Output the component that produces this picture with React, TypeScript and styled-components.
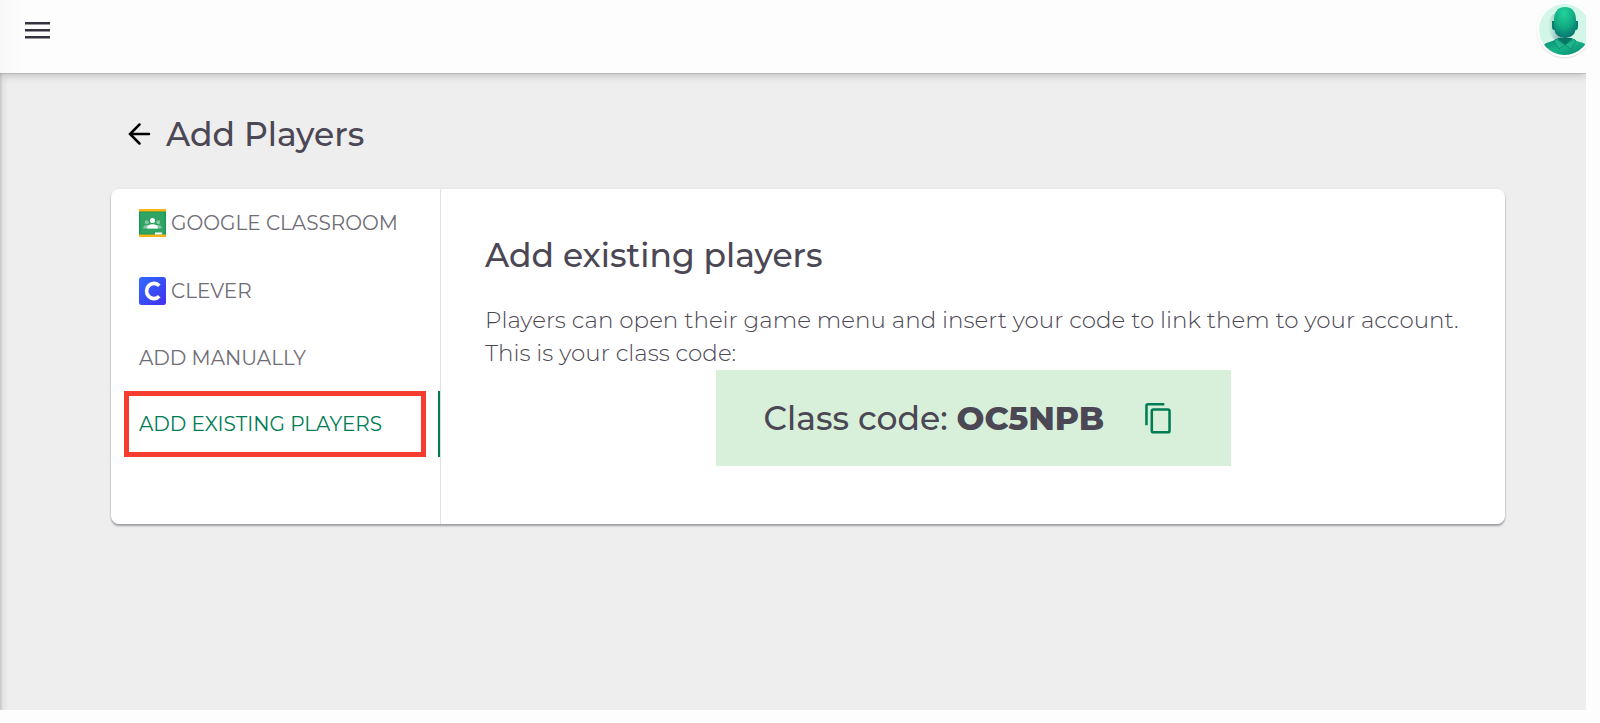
import React, { useState } from "react";
import styled, { createGlobalStyle } from "styled-components";

const ink = "#4b4754";
const green = "#007c55";

const GlobalStyle = createGlobalStyle`
  * { box-sizing: border-box; }
  body {
    margin: 0;
    background: #fdfdfd;
    color: ${ink};
    font-family: Montserrat, Inter, "Open Sans", sans-serif;
  }
  h1, h2, p { margin: 0; font-weight: 400; }
  button { font: inherit; color: inherit; background: none; border: 0; padding: 0; cursor: pointer; }
  svg { display: block; flex: none; }
`;

const Shell = styled.div`
  display: flex;
  flex-direction: column;
  min-height: calc(100vh - 13px);
  margin: 0 14px 13px 0;
  background: linear-gradient(90deg, #c6c6c6, #e4e4e4 3px, #eeeeee 8px);
  overflow: hidden;
`;

const TopBar = styled.header`
  display: flex;
  justify-content: space-between;
  align-items: flex-start;
  height: 73px;
  padding: 2px 0 0 20px;
  background: linear-gradient(90deg, #f8f8f8, #fdfdfd 28px);
  box-shadow: 0 1px 1px rgba(0, 0, 0, 0.1), 0 3px 8px rgba(0, 0, 0, 0.18);
`;

const MenuButton = styled.button`
  padding: 11px 0;
`;

const AvatarButton = styled.button`
  width: 55px;
  height: 55px;
  margin-right: -6px;
  border: 2px solid #ffffff;
  border-radius: 50%;
  box-shadow: 0 1px 2px rgba(0, 0, 0, 0.14);
  overflow: hidden;
`;

const Content = styled.main`
  padding: 38px 81px 60px 111px;
`;

const TitleRow = styled.div`
  display: flex;
  align-items: center;
  gap: 10px;
  height: 46px;
  margin-bottom: 32px;
  padding-left: 13px;
`;

const BackLink = styled.a`
  color: #000000;
`;

const PageTitle = styled.h1`
  font-size: 33px;
  font-weight: 500;
  line-height: 46px;
`;

const Card = styled.section`
  display: flex;
  background: #ffffff;
  border-radius: 8px;
  box-shadow: 0 2px 2px rgba(40, 44, 54, 0.4), 0 0 3px rgba(0, 0, 0, 0.06);
`;

const Tabs = styled.nav`
  display: flex;
  flex-direction: column;
  flex: 0 0 330px;
  border-right: 1px solid #e2e2e4;
`;

const Tab = styled.button<{ $active: boolean; $tall?: boolean }>`
  position: relative;
  display: flex;
  align-items: center;
  gap: 5px;
  height: ${(p) => (p.$tall ? 68 : 66)}px;
  padding-left: 28px;
  font-size: 20px;
  line-height: 26px;
  text-align: left;
  white-space: nowrap;
  color: ${(p) => (p.$active ? green : "#706d76")};
  box-shadow: ${(p) => (p.$active ? `inset -2px 0 0 ${green}` : "none")};

  &::after {
    content: "";
    display: ${(p) => (p.$active ? "block" : "none")};
    position: absolute;
    inset: 0 14px 0 13px;
    border: 5px solid #f73d30;
  }
`;

const Panel = styled.div`
  flex: 1;
  min-width: 0;
  padding: 44px 44px 58px;
`;

const PanelTitle = styled.h2`
  margin-bottom: 27px;
  font-size: 33px;
  font-weight: 500;
  line-height: 44px;
`;

const Copy = styled.p`
  font-size: 23px;
  font-weight: 300;
  line-height: 33px;
`;

const CodeBox = styled.div`
  display: flex;
  align-items: center;
  justify-content: space-between;
  width: 515px;
  max-width: 100%;
  height: 96px;
  margin: 0 auto;
  padding: 0 56px 0 48px;
  background: #d8f0da;
  font-size: 33px;
  font-weight: 500;
  line-height: 44px;
`;

const CodeValue = styled.strong`
  font-weight: 800;
`;

const CopyButton = styled.button`
  color: ${green};
`;

const MenuIcon = () => (
  <svg width="34" height="34" viewBox="0 0 34 34" fill="none" stroke="#37323f" strokeWidth="2.4">
    <path d="M5 10.2H30M5 17.2H30M5 24.2H30" />
  </svg>
);

const BackIcon = () => (
  <svg width="32" height="32" viewBox="0 0 32 32" fill="none" stroke="currentColor" strokeWidth="2.5" strokeLinecap="round">
    <path d="M25 16H6.500M15.500 6.500L6 16L15.500 25.500" />
  </svg>
);

const CopyIcon = () => (
  <svg width="32" height="32" viewBox="0 0 24 24" fill="none" stroke="currentColor" strokeWidth="1.900">
    <path d="M16 1.700H3.600a1 1 0 0 0-1 1V17.500" />
    <rect x="6.600" y="5.700" width="13.300" height="17" rx="1.200" />
  </svg>
);

const ClassroomIcon = () => (
  <svg width="27" height="28" viewBox="0 0 28 28" preserveAspectRatio="none">
    <path d="M0 0H28V28H0z" fill="#fbb416" />
    <path d="M0 2.500H28V25.500H0z" fill="#139a58" />
    <path d="M1.500 3.500H26.500V24.500H1.500z" fill="#2fa463" />
    <g fill="#84c9a1">
      <circle cx="8" cy="13.200" r="2" />
      <circle cx="20" cy="13.200" r="2" />
      <path d="M4.500 19.500v-1c0-1.700 2-2.500 4-2.500h11c2 0 4 .8 4 2.500v1z" />
    </g>
    <path d="M8.500 19.500v-1.200c0-2 3-3.100 5.500-3.100s5.500 1.100 5.500 3.100v1.200z" fill="#fff" />
    <circle cx="14" cy="11.500" r="2.600" fill="#fff" />
    <path d="M16.500 23.500H24V25.500H16.500z" fill="#fff" />
  </svg>
);

const CleverIcon = () => (
  <svg width="27" height="28" viewBox="0 0 28 28" preserveAspectRatio="none">
    <defs>
      <linearGradient id="clever" x1="0" y1="0" x2="1" y2="1">
        <stop offset="0" stopColor="#2f6bff" />
        <stop offset="1" stopColor="#4330ee" />
      </linearGradient>
    </defs>
    <rect width="28" height="28" rx="2.500" fill="url(#clever)" />
    <path d="M21 8.800A7.600 7.600 0 1 0 21 19.200" fill="none" stroke="#fff" strokeWidth="3.800" />
  </svg>
);

const AvatarIcon = () => (
  <svg width="51" height="51" viewBox="0 0 51 51">
    <defs>
      <radialGradient id="face" cx=".45" cy=".2" r=".9">
        <stop offset="0" stopColor="#22d29b" />
        <stop offset=".5" stopColor="#12ab83" />
        <stop offset=".8" stopColor="#0b8274" />
        <stop offset="1" stopColor="#086368" />
      </radialGradient>
      <linearGradient id="body" x1="0" y1="0" x2="1" y2="1">
        <stop offset="0" stopColor="#0a8c72" />
        <stop offset=".5" stopColor="#16b488" />
        <stop offset="1" stopColor="#07836c" />
      </linearGradient>
      <linearGradient id="shade" x1="0" y1="0" x2="1" y2="0">
        <stop offset="0" stopColor="#6f9fa5" stopOpacity="0" />
        <stop offset="1" stopColor="#53808c" stopOpacity=".8" />
      </linearGradient>
    </defs>
    <rect width="51" height="51" fill="#d2f6e7" />
    <path d="M15 10C7 15 6 29 17 37L24 33V10z" fill="url(#shade)" />
    <path d="M4 42C6 38 13 38 18 35H33C38 38 45 38 47 41V51H4z" fill="url(#body)" />
    <path d="M18 34H34L26 41z" fill="#087567" />
    <path d="M17 35L26 41L20 45L15 37zM35 35L26 41L32 45L37 37z" fill="#20b58b" stroke="#08876f" strokeWidth=".7" />
    <path d="M13 17h3v9h-1c-2 0-2-3-2-5zM39 17h-3v9h1c2 0 2-3 2-5z" fill="#078069" />
    <path d="M26 3C34 3 37 9 37 16C37 21 37 27 35 30C32 33 29 34 26 34S20 33 17 30C15 27 15 21 15 16C15 9 18 3 26 3z" fill="url(#face)" />
  </svg>
);

const tabs = [
  { id: "google", label: "GOOGLE CLASSROOM", icon: <ClassroomIcon /> },
  { id: "clever", label: "CLEVER", icon: <CleverIcon /> },
  { id: "manual", label: "ADD MANUALLY" },
  { id: "existing", label: "ADD EXISTING PLAYERS" },
];

export default function App() {
  const [active, setActive] = useState("existing");
  return (
    <>
      <GlobalStyle />
      <Shell>
        <TopBar>
          <MenuButton aria-label="Open menu"><MenuIcon /></MenuButton>
          <AvatarButton aria-label="Account"><AvatarIcon /></AvatarButton>
        </TopBar>
        <Content>
          <TitleRow>
            <BackLink href="#" aria-label="Back"><BackIcon /></BackLink>
            <PageTitle>Add Players</PageTitle>
          </TitleRow>
          <Card>
            <Tabs>
              {tabs.map((t) => (
                <Tab key={t.id} $active={t.id === active} $tall={!!t.icon} onClick={() => setActive(t.id)}>
                  {t.icon}
                  {t.label}
                </Tab>
              ))}
            </Tabs>
            <Panel>
              <PanelTitle>Add existing players</PanelTitle>
              <Copy>Players can open their game menu and insert your code to link them to your account.</Copy>
              <Copy>This is your class code:</Copy>
              <CodeBox>
                <span>Class code: <CodeValue>OC5NPB</CodeValue></span>
                <CopyButton aria-label="Copy class code"><CopyIcon /></CopyButton>
              </CodeBox>
            </Panel>
          </Card>
        </Content>
      </Shell>
    </>
  );
}
